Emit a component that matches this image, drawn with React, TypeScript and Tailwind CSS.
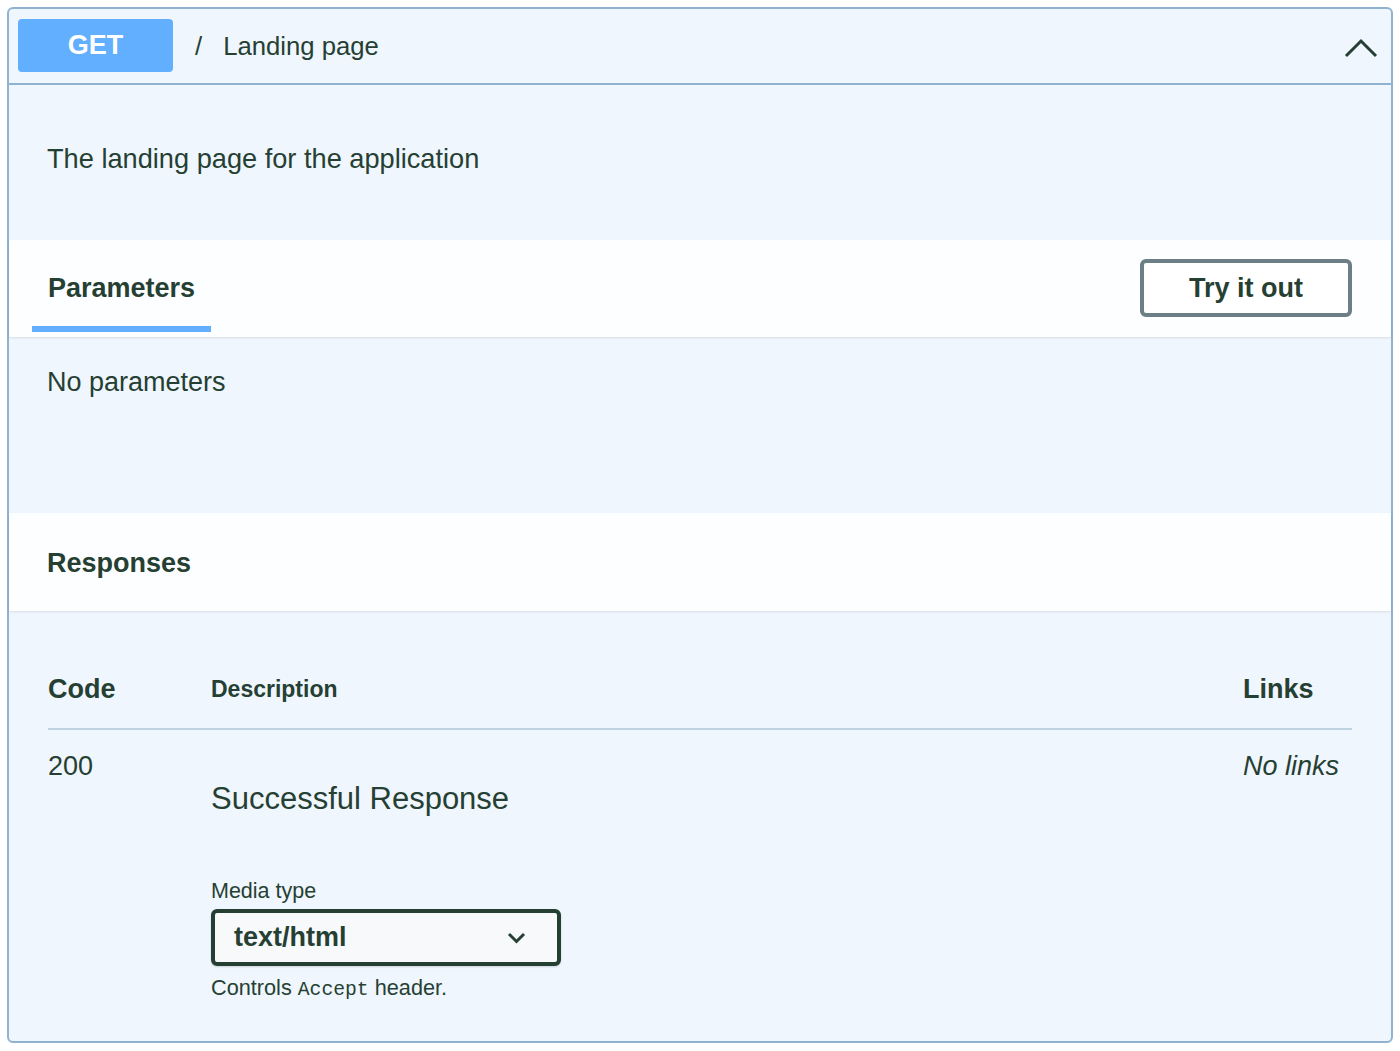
import React from "react";

const ink = "text-[#263f33]";

const ChevronUp = () => (
  <svg width="34" height="20" viewBox="0 0 34 20" fill="none" className="text-[#263f33]">
    <path d="M2 18 L17 3 L32 18" stroke="currentColor" strokeWidth="3" />
  </svg>
);

const ChevronDown = () => (
  <svg width="19" height="12" viewBox="0 0 19 12" fill="none" className="text-[#263f33]">
    <path d="M2 2 L9.5 9.5 L17 2" stroke="currentColor" strokeWidth="3" />
  </svg>
);

export default function App() {
  return (
    <div className="min-h-screen bg-white p-[7px] font-['Liberation_Sans',Arial,sans-serif]">
      <div className="rounded-[6px] border-2 border-[#8fb2d0] bg-[#eff6fe]">
        {/* summary */}
        <div className="flex h-[76px] items-start border-b-2 border-[#8fb2d0] pl-[9px] pr-[13px] pt-[10px]">
          <div className="flex h-[53px] w-[155px] items-center justify-center rounded-[4px] bg-[#61affe] text-[27px] font-bold text-white">
            GET
          </div>
          <div className={`ml-[22px] flex h-[54px] items-center text-[25.7px] ${ink}`}>
            <span>/</span>
            <span className="ml-[21px]">Landing page</span>
          </div>
          <div className="ml-auto mt-[19px]">
            <ChevronUp />
          </div>
        </div>

        {/* description */}
        <div className={`pl-[38px] pt-[58px] pb-[66px] text-[27.2px] leading-[31px] ${ink}`}>
          The landing page for the application
        </div>

        {/* parameters header */}
        <div className="flex items-start justify-between bg-white/85 pl-[23px] pr-[39px] pt-[33px] pb-[5px] shadow-[0_1px_2px_rgba(0,0,0,0.1)]">
          <div className={`border-b-[6px] border-[#61affe] px-4 pb-[22px] text-[27px] font-bold leading-[31px] ${ink}`}>
            Parameters
          </div>
          <button className={`-mt-[14px] flex h-[58px] w-[212px] items-center justify-center rounded-[6px] border-4 border-[#6c7f86] bg-white text-[27px] font-bold ${ink}`}>
            Try it out
          </button>
        </div>

        {/* parameters body */}
        <div className={`pl-[38px] pt-[30px] pb-[115px] text-[27px] leading-[31px] ${ink}`}>
          No parameters
        </div>

        {/* responses header */}
        <div className={`bg-white/85 pl-[38px] pt-[35px] pb-[32px] text-[27px] font-bold leading-[31px] shadow-[0_1px_2px_rgba(0,0,0,0.1)] ${ink}`}>
          Responses
        </div>

        {/* responses table */}
        <div className={`px-[39px] pt-[63px] pb-[38px] ${ink}`}>
          <div className="flex items-center border-b-2 border-[#bfd2df] pb-[23px] leading-[31px]">
            <div className="w-[163px] pl-[0px] text-[27px] font-bold">Code</div>
            <div className="flex-1 text-[23px] font-bold">Description</div>
            <div className="w-[109px] text-[27px] font-bold">Links</div>
          </div>

          <div className="flex items-start pt-[21px]">
            <div className="w-[163px] text-[27px] leading-[31px]">200</div>
            <div className="flex-1">
              <div className="mt-[30px] text-[31px] leading-[36px]">Successful Response</div>
              <div className="mt-[61px] text-[21.5px] leading-[26px]">Media type</div>
              <div className="mt-[5px] flex h-[57px] w-[350px] items-center justify-between rounded-[6px] border-4 border-[#263f33] bg-[#f7f9fb] pl-[19px] pr-[31px] shadow-[0_1px_2px_rgba(0,0,0,0.15)]">
                <span className="text-[27px] font-bold">text/html</span>
                <ChevronDown />
              </div>
              <div className="mt-[9px] text-[21.7px] leading-[26px]">
                Controls <span className="font-['Liberation_Mono',monospace] text-[19.7px]">Accept</span> header.
              </div>
            </div>
            <div className="w-[109px] text-[27px] italic leading-[31px]">No links</div>
          </div>
        </div>
      </div>
    </div>
  );
}
